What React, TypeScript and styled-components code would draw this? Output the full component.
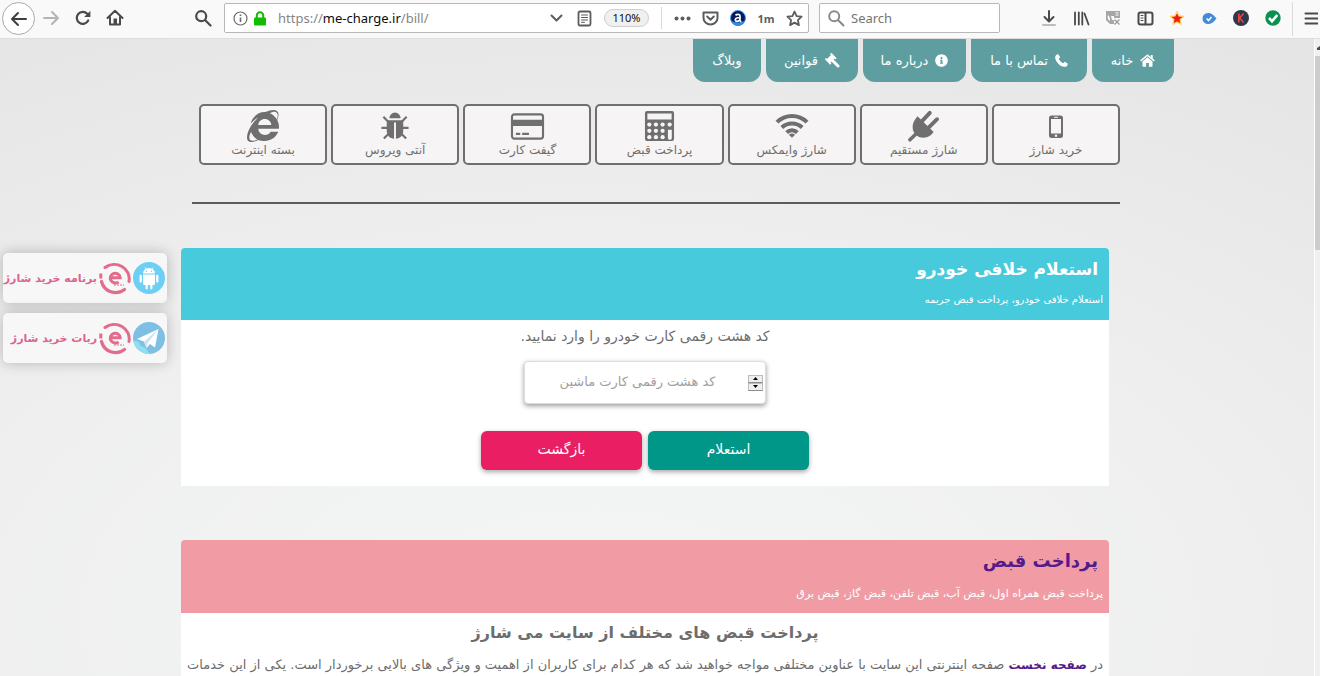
import React from 'react';
import styled, { createGlobalStyle } from 'styled-components';
import { FaInternetExplorer, FaInfoCircle } from 'react-icons/fa';

const FA = '"DejaVu Sans", sans-serif';
const UI = '"Noto Sans", "DejaVu Sans", sans-serif';

const GlobalStyle = createGlobalStyle`
  * { box-sizing: border-box; }
  body { margin: 0; font-family: ${FA}; color: #6d6d6d; }
  button, input { font-family: inherit; }
  h1, h2, h3, p { margin: 0; }
  a { text-decoration: none; }
`;

const Shell = styled.div`
  height: 100vh;
  display: flex;
  flex-direction: column;
  overflow: hidden;
`;

/* ---------- browser toolbar ---------- */

const Toolbar = styled.header`
  flex: none;
  height: 39px;
  display: flex;
  align-items: flex-start;
  padding: 2px 0 0 2px;
  background: #f9f9fa;
  border-bottom: 1px solid #dedede;
  font-family: ${UI};
`;

const IconButton = styled.button<{ $w?: number; $ring?: boolean }>`
  flex: none;
  width: ${(p) => p.$w ?? 32}px;
  height: ${(p) => (p.$ring ? 33 : 32)}px;
  padding: 0;
  display: flex;
  align-items: center;
  justify-content: center;
  color: #4a4a4c;
  background: ${(p) => (p.$ring ? '#fff' : 'transparent')};
  border: ${(p) => (p.$ring ? '1px solid #a9a9a9' : '0')};
  border-radius: ${(p) => (p.$ring ? '50%' : '0')};
`;

const FindButton = styled(IconButton)`
  margin-left: 56px;
  margin-right: 5px;
`;

const AddressBar = styled.div`
  flex: 1;
  min-width: 0;
  height: 30px;
  margin-top: 1px;
  padding-left: 8px;
  display: flex;
  align-items: center;
  background: #fff;
  border: 1px solid #b8b8b8;
  border-radius: 2px;
`;

const AddressMark = styled.span`
  flex: none;
  width: 20px;
  display: flex;
`;

const AddressText = styled.div`
  flex: 1;
  margin-left: 5px;
  font-size: 13px;
  line-height: 20px;
  color: #858585;
  white-space: nowrap;
  b { font-weight: 400; color: #0c0c0d; }
`;

const AddressButton = styled(IconButton)`
  width: 28px;
  height: 28px;
  color: #5c5c5e;
  font-family: "Open Sans", sans-serif;
  font-size: 11px;
  font-weight: 700;
`;

const ZoomPill = styled.button`
  flex: none;
  width: 45px;
  height: 18px;
  margin: 0 12px 0 6px;
  padding: 0;
  border: 1px solid #cfcfcf;
  border-radius: 9px;
  background: #f0f0f0;
  color: #0c0c0d;
  font-size: 11px;
  line-height: 16px;
`;

const Rule = styled.span<{ $h: number; $l?: number; $r: number }>`
  flex: none;
  width: 1px;
  height: ${(p) => p.$h}px;
  margin-left: ${(p) => p.$l ?? 0}px;
  margin-right: ${(p) => p.$r}px;
  background: #dadada;
`;

const SearchBox = styled.label`
  flex: none;
  width: 181px;
  height: 30px;
  margin: 1px 33px 0 10px;
  padding-left: 8px;
  display: flex;
  align-items: center;
  gap: 6px;
  background: #fff;
  border: 1px solid #b8b8b8;
  border-radius: 2px;
  color: #8a8a8a;
  svg { flex: none; }
  input {
    width: 100%;
    border: 0;
    padding: 0;
    outline: 0;
    background: transparent;
    font-size: 13px;
  }
  input::placeholder { color: #757575; opacity: 1; }
`;

/* ---------- page ---------- */

const Viewport = styled.div`
  flex: 1;
  min-height: 0;
  display: flex;
  position: relative;
`;

const Page = styled.main`
  flex: 1;
  min-width: 0;
  overflow: hidden;
  direction: rtl;
  background: radial-gradient(ellipse 110% 120% at 45% 90%, #f4f6f6 0%, #efefef 45%, #e2e2e2 100%);
`;

const ScrollTrack = styled.div`
  flex: none;
  width: 6px;
  background: #f0f0f0;
  border-left: 1px solid #fff;
`;

const ScrollUp = styled.div`
  height: 17px;
  display: flex;
  align-items: center;
  justify-content: flex-end;
`;

const ScrollThumb = styled.div`
  height: 194px;
  background: #cdcdcd;
`;

const TopNav = styled.nav`
  display: flex;
  gap: 5px;
  padding-right: 140px;
`;

const NavTab = styled.a<{ $w: number }>`
  width: ${(p) => p.$w}px;
  height: 43px;
  display: flex;
  align-items: center;
  justify-content: center;
  gap: 7px;
  background: #5f9ea0;
  border-radius: 0 0 12px 12px;
  color: #fff;
  font-size: 13px;
  white-space: nowrap;
  svg { flex: none; }
`;

const Services = styled.nav`
  display: grid;
  grid-template-columns: repeat(7, 1fr);
  gap: 4px;
  margin: 22px 194px 0 192px;
  padding: 0 0 37px 7px;
  border-bottom: 2px solid #5c5c5c;
`;

const ServiceCard = styled.a`
  height: 61px;
  padding-top: 4px;
  display: flex;
  flex-direction: column;
  align-items: center;
  background: #f6f4f4;
  border: 2px solid #6f6f6f;
  border-radius: 5px;
  color: #6f6f6f;
  font-size: 12px;
  line-height: 16px;
  white-space: nowrap;
  svg { height: 32px; flex: none; }
`;

const Panel = styled.section<{ $top: number }>`
  margin: ${(p) => p.$top}px 205px 0 181px;
  background: #fff;
  border-radius: 4px 4px 0 0;
  overflow: hidden;
`;

const PanelHead = styled.div<{ $bg: string; $link?: boolean }>`
  height: ${(p) => (p.$link ? 73 : 72)}px;
  padding: 6px 6px 0 0;
  background: ${(p) => p.$bg};
  color: #fff;
  h2 {
    padding-right: 5px;
    font-size: ${(p) => (p.$link ? 18 : 17)}px;
    line-height: 30px;
  }
  h2 a { color: #551a8b; }
  p {
    margin-top: ${(p) => (p.$link ? 8 : 6)}px;
    font-size: ${(p) => (p.$link ? 11 : 10)}px;
    line-height: 20px;
  }
`;

const Form = styled.form`
  height: 166px;
  display: flex;
  flex-direction: column;
  align-items: center;
  > label {
    margin-top: 4px;
    font-size: 14px;
    line-height: 24px;
  }
`;

const CodeField = styled.div`
  width: 242px;
  height: 43px;
  margin-top: 13px;
  padding: 0 2px;
  display: flex;
  align-items: center;
  background: #fff;
  border: 1px solid #ddd;
  border-radius: 4px;
  box-shadow: 0 2px 5px rgba(0, 0, 0, 0.4);
  input {
    flex: 1;
    min-width: 0;
    border: 0;
    outline: 0;
    padding: 0 0 3px;
    background: transparent;
    text-align: center;
    font-size: 13px;
  }
  input::placeholder { color: #a0a0a0; opacity: 1; }
`;

const Spinner = styled.div`
  width: 15px;
  display: flex;
  flex-direction: column;
  button {
    height: 8px;
    padding: 0;
    display: flex;
    align-items: center;
    justify-content: center;
    background: #efefef;
    border: 1px solid #bdbdbd;
    border-bottom-color: #8c8c8c;
  }
`;

const Actions = styled.div`
  display: flex;
  gap: 6px;
  margin-top: 27px;
`;

const ActionButton = styled.button<{ $bg: string }>`
  width: 161px;
  height: 39px;
  padding: 0 0 3px;
  border: 0;
  border-radius: 6px;
  background: ${(p) => p.$bg};
  color: #fff;
  font-size: 14px;
  box-shadow: 0 2px 5px rgba(0, 0, 0, 0.35);
`;

const Article = styled.article`
  padding: 5px 6px 20px;
  h3 {
    font-size: 16px;
    line-height: 30px;
    text-align: center;
  }
  p {
    margin-top: 5px;
    font-size: 13px;
    line-height: 24px;
    white-space: nowrap;
  }
  a { color: #551a8b; font-size: 12px; font-weight: 700; }
`;

const Floating = styled.aside`
  position: absolute;
  left: 3px;
  top: 214px;
  display: flex;
  flex-direction: column;
  gap: 10px;
`;

const Badge = styled.a`
  width: 164px;
  height: 50px;
  padding-right: 2px;
  display: flex;
  align-items: center;
  direction: rtl;
  gap: 2px;
  background: #f7f7f7;
  border-radius: 5px;
  box-shadow: 0 0 14px rgba(0, 0, 0, 0.24);
  color: #dc6490;
  font-size: 11px;
  font-weight: 700;
  white-space: nowrap;
  svg { flex: none; }
`;

/* ---------- toolbar drawings ---------- */

const line = { fill: 'none', stroke: 'currentColor', strokeWidth: 2, strokeLinecap: 'round', strokeLinejoin: 'round' } as const;

const ArrowIcon = ({ flip }: { flip?: boolean }) => (
  <svg width="18" height="16" viewBox="0 0 18 16" {...line} stroke={flip ? '#b4b4b5' : '#3e3e40'}>
    <path d={flip ? 'M2 8h14M10 2l6 6-6 6' : 'M16 8H2M8 2L2 8l6 6'} />
  </svg>
);
const ReloadIcon = () => (
  <svg width="16" height="16" viewBox="0 0 16 16">
    <path d="M13.2 10.5A6 6 0 1 1 12.2 3.8" {...line} strokeWidth={2.2} />
    <path d="M15.4 .8v6.2H9.2z" fill="currentColor" />
  </svg>
);
const HomeIcon = () => (
  <svg width="18" height="18" viewBox="0 0 18 18">
    <path d="M1.5 9L9 1.8 16.5 9M4 8v7.5h10V8" {...line} />
    <path d="M7.5 9.5h3.5v6H7.5z" fill="currentColor" />
  </svg>
);
const GlassIcon = ({ w = 2.2 }: { w?: number }) => (
  <svg width="17" height="17" viewBox="0 0 17 17">
    <path d="M11.2 6.200a5 5 0 1 1-10 0 5 5 0 0 1 10 0zM10 10L15.500 15.500" {...line} strokeWidth={w} />
  </svg>
);
const InfoMark = () => (
  <svg width="15" height="15" viewBox="0 0 15 15" stroke="#6a6a6b" fill="none">
    <circle cx="7.5" cy="7.5" r="6.5" strokeWidth="1.2" />
    <path d="M7.5 6.5v4.5M7.5 3.5v1.6" strokeWidth="1.6" />
  </svg>
);
const LockIcon = () => (
  <svg width="14" height="15" viewBox="0 0 14 15">
    <path d="M3.8 7V4.500a3.200 3.200 0 0 1 6.400 0V7" fill="none" stroke="#12bc00" strokeWidth="2" />
    <rect x="1" y="6.500" width="12" height="8" rx="1" fill="#12bc00" />
  </svg>
);
const ChevronIcon = () => (
  <svg width="13" height="9" viewBox="0 0 13 9" {...line}><path d="M1.500 1.500l5 5 5-5" /></svg>
);
const ReaderIcon = () => (
  <svg width="15" height="17" viewBox="0 0 15 17" {...line}>
    <rect x="1.500" y="1.500" width="12" height="14" rx="1.500" strokeWidth="1.800" />
    <path d="M4.500 5h6M4.500 7.500h6M4.500 10h6M4.500 12.300h3" strokeWidth="1" />
  </svg>
);
const DotsIcon = () => (
  <svg width="17" height="5" viewBox="0 0 17 5" fill="currentColor">
    <circle cx="2.500" cy="2.500" r="2" /><circle cx="8.500" cy="2.500" r="2" /><circle cx="14.500" cy="2.500" r="2" />
  </svg>
);
const PocketIcon = () => (
  <svg width="17" height="15" viewBox="0 0 17 15" {...line}>
    <path d="M1.500 1.500h14v5.500a7 6.500 0 0 1-14 0zM5.200 5.500l3.300 3.200 3.300-3.200" />
  </svg>
);
const AlexaIcon = () => (
  <svg width="16" height="16" viewBox="0 0 16 16">
    <circle cx="8" cy="8" r="7.500" fill="#07185c" stroke="#3f9be8" />
    <path d="M1.200 10.500a7 7 0 0 0 13.600 0C12 13 4 13 1.200 10.500z" fill="#2f8be0" />
    <path d="M5.500 5.300C7 3.800 10 4 10 6v5.500M10 7.500C7.500 7.500 5.300 8 5.300 9.800c0 2 3.200 2 4.700 0M10 11.500h1.500" fill="none" stroke="#fff" strokeWidth="1.700" />
  </svg>
);
const StarIcon = () => (
  <svg width="17" height="17" viewBox="0 0 17 17" {...line} strokeWidth={1.8}>
    <path d="M8.500 1.500l2.100 4.600 5 .6-3.700 3.400 1 5-4.400-2.500-4.400 2.500 1-5L1.400 6.700l5-.6z" />
  </svg>
);
const DownloadIcon = () => (
  <svg width="16" height="18" viewBox="0 0 16 18" {...line}>
    <path d="M8 2v10M3.500 8L8 12.500 12.500 8" /><path d="M2 16h12" stroke="#bdbdbd" />
  </svg>
);
const LibraryIcon = () => (
  <svg width="17" height="15" viewBox="0 0 17 15" {...line}>
    <path d="M2 1.500v12M5.800 1.500v12M9.300 1.500v12M11.500 2.500l4 11" strokeWidth="1.800" />
  </svg>
);
const TranslateIcon = () => (
  <svg width="16" height="16" viewBox="0 0 16 16">
    <path d="M1 1h14v7H9v6H5L1 10z" fill="#a6a6a6" />
    <path d="M3 5c1 1 2 2 2 4v2c-2-1-3-3-2-6zM6 6h3v4H7z" fill="#fafafa" />
    <path d="M10.500 2.800h3M10.500 5h3" stroke="#fff" />
    <path d="M9.500 9.500l5 5M14.500 9.500l-5 5" stroke="#9a9a9a" strokeWidth="1.300" />
  </svg>
);
const SidebarIcon = () => (
  <svg width="17" height="15" viewBox="0 0 17 15" {...line}>
    <rect x="1.500" y="1.500" width="14" height="12" rx="2" /><path d="M8.500 2v11" />
    <path d="M4 4.500h2M4 7h2M4 9.500h2" strokeWidth="1" />
  </svg>
);
const RedStarIcon = () => (
  <svg width="16" height="16" viewBox="0 0 16 16">
    <path d="M8 1.600l1.900 4.300 4.700.5-3.500 3.200 1 4.600L8 11.900l-4.100 2.300 1-4.600L1.400 6.400l4.700-.5z" fill="#f01c1c" stroke="#ffd45c" strokeWidth="1.200" strokeLinejoin="round" />
  </svg>
);
const TagIcon = () => (
  <svg width="15" height="13" viewBox="0 0 15 13">
    <path d="M6 1c4 0 6 2.500 8.500 5.500C12 9.500 10 12 6 12A5.500 5.500 0 0 1 6 1z" fill="#428bd6" />
    <path d="M4.500 6.500l2 2 3-3.500" fill="none" stroke="#fff" strokeWidth="1.600" />
  </svg>
);
const KIcon = () => (
  <svg width="16" height="16" viewBox="0 0 16 16">
    <circle cx="8" cy="8" r="8" fill="#2b394b" />
    <path d="M5.800 3.500v9M10.700 3.500L6.500 8l4.200 4.500" fill="none" stroke="#ee4540" strokeWidth="1.600" />
  </svg>
);
const CheckIcon = () => (
  <svg width="16" height="16" viewBox="0 0 16 16">
    <circle cx="8" cy="8" r="7.700" fill="#0a9150" />
    <path d="M4 8l3 3.200L12.300 5" fill="none" stroke="#fff" strokeWidth="2.600" />
  </svg>
);
const MenuIcon = () => (
  <svg width="14" height="13" viewBox="0 0 14 13" {...line}><path d="M1.500 1.500h12M1.500 6.500h12M1.500 11.500h12" /></svg>
);

/* ---------- page drawings ---------- */

const NavHome = () => (
  <svg width="15" height="13" viewBox="0 0 15 13" fill="currentColor">
    <path d="M7.500 3.300l5 4.200V12a.7.7 0 0 1-.7.7H8.900V9H6.100v3.700H3.200a.7.7 0 0 1-.7-.7V7.500z" />
    <path d="M.7 6.800L7.500 1.200l6.800 5.600" fill="none" stroke="currentColor" strokeWidth="1.500" />
    <path d="M10.800 .9h1.900v4l-1.900-1.600z" />
  </svg>
);
const NavPhone = () => (
  <svg width="13" height="13" viewBox="0 0 12 12" fill="currentColor">
    <path d="M2.800 .1L1 .9C-.4 2.500-.1 5.200 2.500 8.300 5.300 11.800 8.700 12.600 11 11.200l.9-2.300L9 7.200 7.500 8.500C5.900 7.700 4.300 6 3.500 4.500L4.800 3z" />
  </svg>
);
const NavGavel = () => (
  <svg width="15" height="15" viewBox="0 0 15 15" fill="none" stroke="currentColor">
    <path d="M3.200 8.300L8.300 3.200" strokeWidth="5" />
    <path d="M1 6.200L5.300 10.500M6.200 1L10.500 5.300" strokeWidth="1.800" strokeLinecap="round" />
    <path d="M7 7l6 6" strokeWidth="3" strokeLinecap="round" />
  </svg>
);
const PhoneCard = () => (
  <svg width="16" viewBox="0 0 16 32">
    <rect x="1" y="5.500" width="14" height="22.500" rx="2.500" fill="#6f6f6f" />
    <path d="M3 9h10v14.500H3z" fill="#f6f4f4" />
    <path d="M6 7.300h4" stroke="#f6f4f4" strokeWidth="1" /><circle cx="8" cy="25.700" r="1.200" fill="#f6f4f4" />
  </svg>
);
const PlugCard = () => (
  <svg width="33" viewBox="0 0 33 33" fill="currentColor">
    <path d="M2.500 30.800L10 23.500" stroke="currentColor" strokeWidth="3.600" strokeLinecap="round" />
    <path d="M10.300 6.500L27 22.800l-2.500 2.800C20 29.500 12.500 29.800 8.500 25.500 4.200 21.300 4.500 14 8 9.500z" />
    <path d="M14.500 12L23 3M21.500 18.500l9-9" stroke="currentColor" strokeWidth="4" strokeLinecap="round" />
  </svg>
);
const WifiCard = () => (
  <svg width="36" viewBox="0 0 36 33" fill="none" stroke="currentColor" strokeWidth="4.200">
    <path d="M2.500 12.500C11 4 25 4 33.500 12.500M7.500 18c5.700-5.500 15.300-5.500 21 0M12.500 23.200c3.200-2.900 7.800-2.900 11 0" />
    <path d="M14.800 25.400c2-1.400 4.400-1.400 6.400 0L18 28.600z" fill="currentColor" stroke="none" />
  </svg>
);
const CalcCard = () => (
  <svg width="31" viewBox="0 0 32 33">
    <rect x="1" y="1" width="30" height="31" rx="2" fill="#6f6f6f" />
    <path d="M3.500 3.500h25v6.300h-25zM24.700 20.300h4v8.500a2 2 0 0 1-4 0z" fill="#f6f4f4" />
    {[15, 21.5, 28].map((y) => [5.5, 12.3, 19.2].map((x) => <circle key={`${x}-${y}`} cx={x} cy={y} r="2.200" fill="#f6f4f4" />))}
    <circle cx="26.500" cy="15" r="2.200" fill="#f6f4f4" />
  </svg>
);
const GiftCard = () => (
  <svg width="35" viewBox="0 0 36 33">
    <rect x="2" y="4.500" width="32" height="25" rx="2.500" fill="none" stroke="currentColor" strokeWidth="2.200" />
    <path d="M2 10h32v6.500H2zM6 23.500h4.500v2.300H6zM12.500 23.500h7v2.300h-7z" fill="currentColor" />
  </svg>
);
const BugCard = () => (
  <svg width="30" viewBox="0 0 30 33">
    <path d="M9.200 8.500a5.800 6 0 0 1 11.600 0z" fill="currentColor" />
    <path d="M3 7l5 5M27 7l-5 5M1 18.500h7M29 18.500h-7M3.500 29.500L8.500 24.500M26.500 29.500L21.500 24.500" stroke="currentColor" strokeWidth="2.200" />
    <path d="M6.500 10.500h17V21.500c0 5-3.500 8-7.500 8.200V13h-2v16.700C10 29.500 6.500 26.500 6.500 21.500z" fill="currentColor" />
  </svg>
);

const BrandMark = () => (
  <svg width="32" height="34" viewBox="0 0 32 34" fill="none" stroke="#e26c8c">
    <path d="M6 6.500A15 14.500 0 0 1 30 20.500" strokeWidth="3" strokeLinecap="round" />
    <path d="M1.800 12.500v5" strokeWidth="3" />
    <path d="M2.500 20.500A14.500 14.500 0 0 0 25.500 28.500" strokeWidth="3.200" strokeLinecap="round" />
    <path d="M11.500 16.700h9.600a4.900 4.900 0 1 0-1.600 4.100" strokeWidth="3" />
    <path d="M15 24h10" strokeWidth="1" strokeDasharray="2 1" />
  </svg>
);
const AndroidMark = () => (
  <svg width="32" height="32" viewBox="0 0 32 32">
    <circle cx="16" cy="16" r="16" fill="#6dcff6" />
    <g fill="#fff" stroke="#fff">
      <path d="M10 11.500a6 5.500 0 0 1 12 0z" stroke="none" />
      <path d="M12 5.500l1.500 2.200M20 5.500l-1.500 2.200" strokeWidth=".8" />
      <path d="M10 12.500h12v9a1.500 1.500 0 0 1-1.500 1.500h-9a1.500 1.500 0 0 1-1.500-1.500z" stroke="none" />
      <path d="M7.700 14v5.500M24.300 14v5.500M13.700 22v4.300M18.300 22v4.300" strokeWidth="2.300" strokeLinecap="round" />
    </g>
    <circle cx="13.500" cy="9.200" r=".7" fill="#6dcff6" /><circle cx="18.500" cy="9.200" r=".7" fill="#6dcff6" />
  </svg>
);
const TelegramMark = () => (
  <svg width="32" height="32" viewBox="0 0 32 32">
    <circle cx="16" cy="16" r="16" fill="#7fbfe3" />
    <path d="M.5 19.500c5-1.500 6 1.500 7 4.500 3 0 7 3 9 8A16 16 0 0 1 .5 19.500z" fill="#8edff0" />
    <path d="M25.500 7L4 17l7 2.500L13.500 26l3.500-4 5 3.500z" fill="#fff" />
    <path d="M25.500 7L11 19.500l2.500 6.500 1.200-5z" fill="#cfe3ee" />
  </svg>
);

const tools: [string, React.ReactNode][] = [
  ['Downloads', <DownloadIcon />],
  ['Library', <LibraryIcon />],
  ['Translate', <TranslateIcon />],
  ['Sidebars', <SidebarIcon />],
  ['Bookmark star', <RedStarIcon />],
  ['Tags', <TagIcon />],
  ['K', <KIcon />],
  ['Site check', <CheckIcon />],
];

const tabs: [string, number, React.ReactNode][] = [
  ['خانه', 82, <NavHome />],
  ['تماس با ما', 116, <NavPhone />],
  ['درباره ما', 103, <FaInfoCircle size={13} />],
  ['قوانین', 92, <NavGavel />],
  ['وبلاگ', 68, null],
];

const services: [string, React.ReactNode][] = [
  ['خرید شارژ', <PhoneCard />],
  ['شارژ مستقیم', <PlugCard />],
  ['شارژ وایمکس', <WifiCard />],
  ['پرداخت قبض', <CalcCard />],
  ['گیفت کارت', <GiftCard />],
  ['آنتی ویروس', <BugCard />],
  ['بسته اینترنت', <FaInternetExplorer size={32} />],
];

export default function App() {
  return (
    <Shell>
      <GlobalStyle />
      <Toolbar>
        <IconButton $ring $w={33} aria-label="Back"><ArrowIcon /></IconButton>
        <IconButton aria-label="Forward"><ArrowIcon flip /></IconButton>
        <IconButton aria-label="Reload"><ReloadIcon /></IconButton>
        <IconButton aria-label="Home"><HomeIcon /></IconButton>
        <FindButton aria-label="Find"><GlassIcon /></FindButton>
        <AddressBar>
          <AddressMark><InfoMark /></AddressMark>
          <AddressMark><LockIcon /></AddressMark>
          <AddressText>https://<b>me-charge.ir</b>/bill/</AddressText>
          <AddressButton aria-label="History"><ChevronIcon /></AddressButton>
          <AddressButton aria-label="Reader view"><ReaderIcon /></AddressButton>
          <ZoomPill>110%</ZoomPill>
          <Rule $h={22} $r={6} />
          <AddressButton aria-label="Page actions"><DotsIcon /></AddressButton>
          <AddressButton aria-label="Pocket"><PocketIcon /></AddressButton>
          <AddressButton aria-label="Alexa"><AlexaIcon /></AddressButton>
          <AddressButton>1m</AddressButton>
          <AddressButton aria-label="Bookmark"><StarIcon /></AddressButton>
        </AddressBar>
        <SearchBox>
          <GlassIcon w={2} />
          <input type="search" placeholder="Search" aria-label="Search" />
        </SearchBox>
        {tools.map(([name, icon]) => (
          <IconButton key={name} aria-label={name}>{icon}</IconButton>
        ))}
        <Rule $h={34} $l={3} $r={8} />
        <IconButton $w={19} aria-label="Menu"><MenuIcon /></IconButton>
      </Toolbar>

      <Viewport>
        <Page>
          <TopNav>
            {tabs.map(([name, w, icon]) => (
              <NavTab key={name} href="#" $w={w}>{icon}{name}</NavTab>
            ))}
          </TopNav>
          <Services>
            {services.map(([name, icon]) => (
              <ServiceCard key={name} href="#">{icon}{name}</ServiceCard>
            ))}
          </Services>

          <Panel $top={44}>
            <PanelHead $bg="#48cadd">
              <h2>استعلام خلافی خودرو</h2>
              <p>استعلام خلافی خودرو، پرداخت قبض جریمه</p>
            </PanelHead>
            <Form onSubmit={(e) => e.preventDefault()}>
              <label htmlFor="car-code">کد هشت رقمی کارت خودرو را وارد نمایید.</label>
              <CodeField>
                <Spinner>
                  <button type="button" aria-label="افزایش"><svg width="5" height="3"><path d="M0 3h5L2.500 0z" /></svg></button>
                  <button type="button" aria-label="کاهش"><svg width="5" height="3"><path d="M0 0h5L2.500 3z" /></svg></button>
                </Spinner>
                <input id="car-code" inputMode="numeric" placeholder="کد هشت رقمی کارت ماشین" />
              </CodeField>
              <Actions>
                <ActionButton type="submit" $bg="#009688">استعلام</ActionButton>
                <ActionButton type="button" $bg="#e91e63">بازگشت</ActionButton>
              </Actions>
            </Form>
          </Panel>

          <Panel $top={54}>
            <PanelHead $bg="#f19ca5" $link>
              <h2><a href="#">پرداخت قبض</a></h2>
              <p>پرداخت قبض همراه اول، قبض آب، قبض تلفن، قبض گاز، قبض برق</p>
            </PanelHead>
            <Article>
              <h3>پرداخت قبض های مختلف از سایت می شارژ</h3>
              <p>
                در <a href="#">صفحه نخست</a> صفحه اینترنتی این سایت با عناوین مختلفی مواجه خواهید شد که هر کدام برای کاربران از اهمیت و ویژگی های بالایی برخوردار است. یکی از این خدمات
              </p>
            </Article>
          </Panel>
        </Page>
        <ScrollTrack>
          <ScrollUp><svg width="3" height="4" viewBox="0 0 3 4"><path d="M0 4V2l3-2v4z" fill="#505050" /></svg></ScrollUp>
          <ScrollThumb />
        </ScrollTrack>
        <Floating>
          <Badge href="#"><AndroidMark /><BrandMark />برنامه خرید شارژ</Badge>
          <Badge href="#"><TelegramMark /><BrandMark />ربات خرید شارژ</Badge>
        </Floating>
      </Viewport>
    </Shell>
  );
}
